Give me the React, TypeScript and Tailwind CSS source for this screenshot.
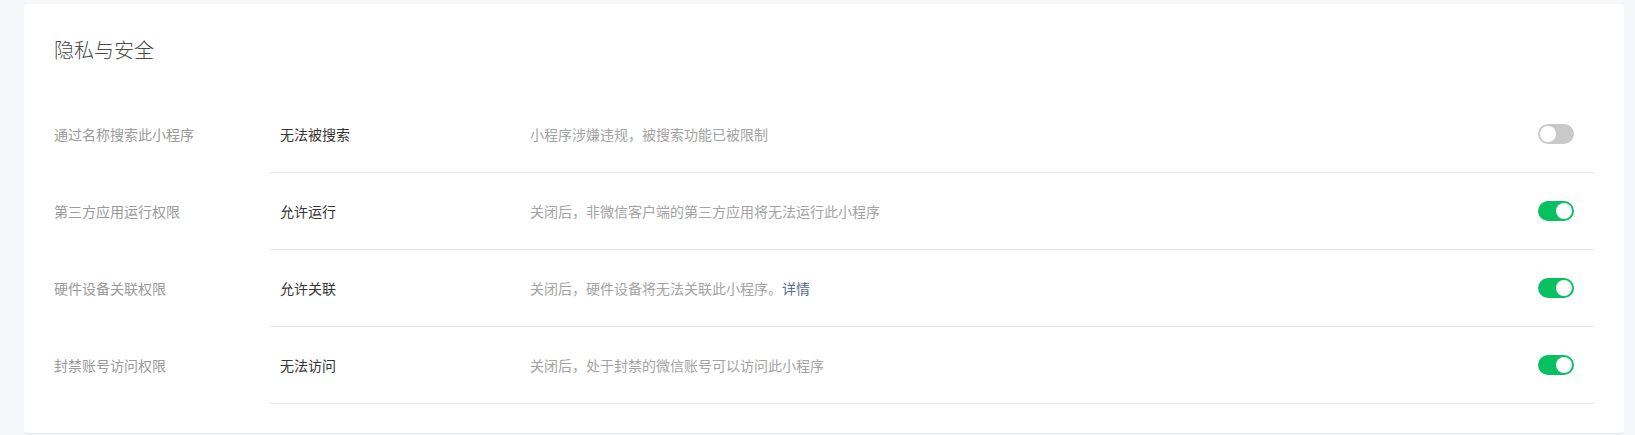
import { useState } from 'react'

type Row = {
  label: string
  value: string
  desc: string
  link?: string
  on: boolean
}

const ROWS: Row[] = [
  { label: '通过名称搜索此小程序', value: '无法被搜索', desc: '小程序涉嫌违规，被搜索功能已被限制', on: false },
  { label: '第三方应用运行权限', value: '允许运行', desc: '关闭后，非微信客户端的第三方应用将无法运行此小程序', on: true },
  { label: '硬件设备关联权限', value: '允许关联', desc: '关闭后，硬件设备将无法关联此小程序。', link: '详情', on: true },
  { label: '封禁账号访问权限', value: '无法访问', desc: '关闭后，处于封禁的微信账号可以访问此小程序', on: true },
]

function Toggle({ on, onClick }: { on: boolean; onClick: () => void }) {
  return (
    <button
      type="button"
      onClick={onClick}
      className={[
        'relative w-[36px] h-[20px] rounded-full shrink-0 transition-colors',
        on ? 'bg-[#07c160]' : 'bg-[#c9c9c9]',
      ].join(' ')}
    >
      <span
        className={[
          'absolute top-[2px] w-[16px] h-[16px] rounded-full bg-white transition-all',
          on ? 'left-[18px]' : 'left-[2px]',
        ].join(' ')}
      />
    </button>
  )
}

export default function App() {
  const [rows, setRows] = useState(ROWS)

  return (
    <div
      className="min-h-[435px] bg-[#f6f7f9] pt-[4px] pl-[24px] pr-[11px] pb-[1px]"
      style={{ fontFamily: '"Noto Sans CJK SC", "Noto Sans", sans-serif' }}
    >
      <div className="bg-white rounded-[4px] border-b border-[#e4e6e9] px-[30px] pt-[32px] pb-[29px]">
        {/* 标题 */}
        <h2 className="text-[20px] leading-[28px] text-[#4a4a4a] font-light">隐私与安全</h2>

        <div className="mt-[32px]">
          {rows.map((row, i) => (
            <div key={row.label} className="flex items-stretch">
              <div className="w-[216px] shrink-0 flex items-center text-[14px] text-[#9a9a9a]">
                {row.label}
              </div>
              <div className="flex-1 flex items-center h-[77px] border-b border-[#e7e7e7] pl-[10px] pr-[20px]">
                <div className="w-[250px] shrink-0 text-[14px] text-[#353535]">{row.value}</div>
                <div className="flex-1 text-[14px] text-[#a3a3a3]">
                  {row.desc}
                  {row.link && <a className="text-[#576b95] cursor-pointer">{row.link}</a>}
                </div>
                <Toggle
                  on={row.on}
                  onClick={() =>
                    setRows((prev) => prev.map((r, j) => (j === i ? { ...r, on: !r.on } : r)))
                  }
                />
              </div>
            </div>
          ))}
        </div>
      </div>
    </div>
  )
}
